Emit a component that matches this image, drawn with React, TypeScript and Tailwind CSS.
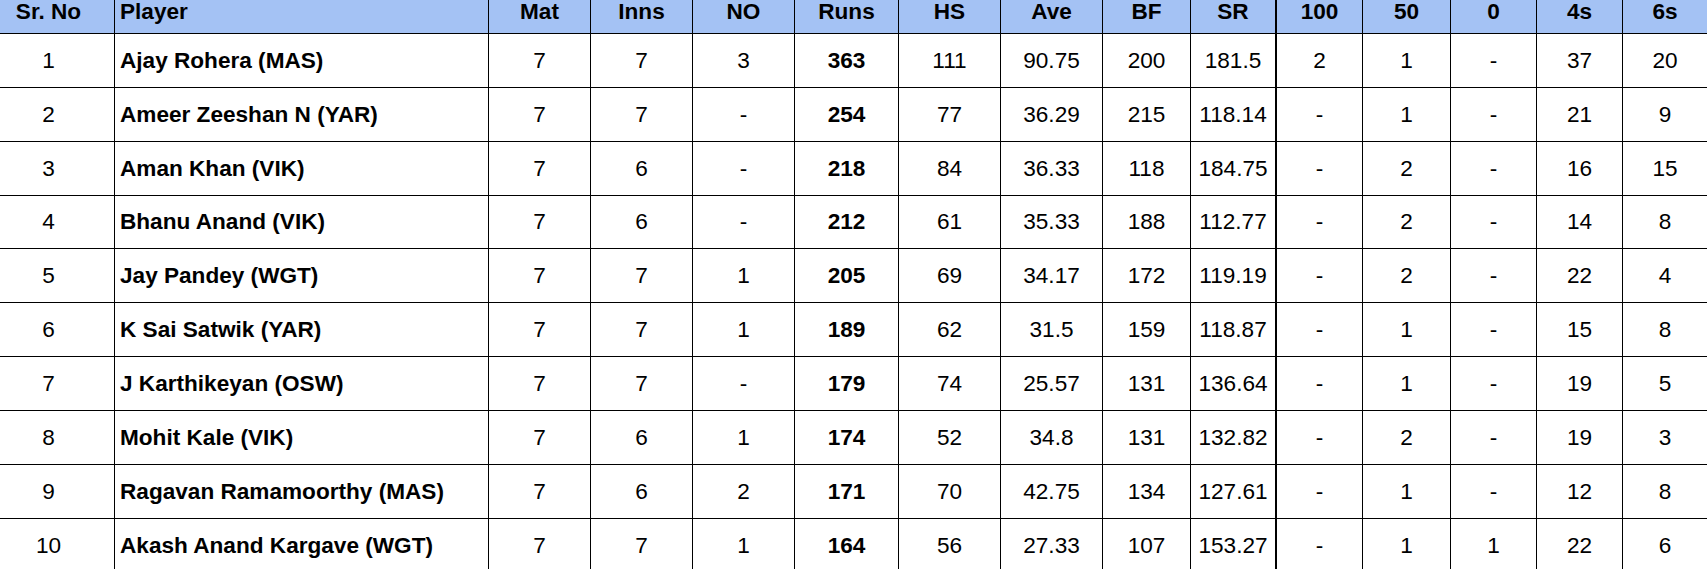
import React from 'react';

const headers = [
  'Sr. No',
  'Player',
  'Mat',
  'Inns',
  'NO',
  'Runs',
  'HS',
  'Ave',
  'BF',
  'SR',
  '100',
  '50',
  '0',
  '4s',
  '6s',
];

const raw = [
  '1|Ajay Rohera (MAS)|7|7|3|363|111|90.75|200|181.5|2|1|-|37|20',
  '2|Ameer Zeeshan N (YAR)|7|7|-|254|77|36.29|215|118.14|-|1|-|21|9',
  '3|Aman Khan (VIK)|7|6|-|218|84|36.33|118|184.75|-|2|-|16|15',
  '4|Bhanu Anand (VIK)|7|6|-|212|61|35.33|188|112.77|-|2|-|14|8',
  '5|Jay Pandey (WGT)|7|7|1|205|69|34.17|172|119.19|-|2|-|22|4',
  '6|K Sai Satwik (YAR)|7|7|1|189|62|31.5|159|118.87|-|1|-|15|8',
  '7|J Karthikeyan (OSW)|7|7|-|179|74|25.57|131|136.64|-|1|-|19|5',
  '8|Mohit Kale (VIK)|7|6|1|174|52|34.8|131|132.82|-|2|-|19|3',
  '9|Ragavan Ramamoorthy (MAS)|7|6|2|171|70|42.75|134|127.61|-|1|-|12|8',
  '10|Akash Anand Kargave (WGT)|7|7|1|164|56|27.33|107|153.27|-|1|1|22|6',
];

const rows = raw.map((line) => line.split('|'));

// border classes per column: SR gets the heavier divider, last column none
function cellBorder(i: number) {
  if (i === 14) return 'border-b border-black';
  if (i === 9) return 'border-b border-r-2 border-black';
  return 'border-b border-r border-black';
}

function align(i: number) {
  if (i === 0) return 'justify-center pr-[17px]';
  if (i === 1) return 'justify-start pl-[5px]';
  return 'justify-center';
}

export default function App() {
  return (
    <div
      className="w-[1707px] h-[569px] overflow-hidden bg-white text-black text-[22.6px]"
      style={{ fontFamily: '"Liberation Sans", Arial, sans-serif' }}
    >
      <div className="grid grid-cols-[115px_374px_102px_102px_102px_104px_102px_102px_88px_86px_86px_88px_86px_86px_84px] grid-rows-[34px] auto-rows-[53.85px]">
        {headers.map((h, i) => (
          <div
            key={h}
            className={`flex items-start pt-[1px] bg-[#a4c2f4] font-bold leading-[22px] ${cellBorder(i)} ${align(i)}`}
          >
            {h}
          </div>
        ))}

        {rows.map((r) =>
          r.map((v, i) => (
            <div
              key={`${r[0]}-${i}`}
              className={`flex items-center pt-[1px] leading-[22px] ${
                i === 1 || i === 5 ? 'font-bold' : ''
              } ${cellBorder(i)} ${align(i)}`}
            >
              {v}
            </div>
          )),
        )}
      </div>
    </div>
  );
}
